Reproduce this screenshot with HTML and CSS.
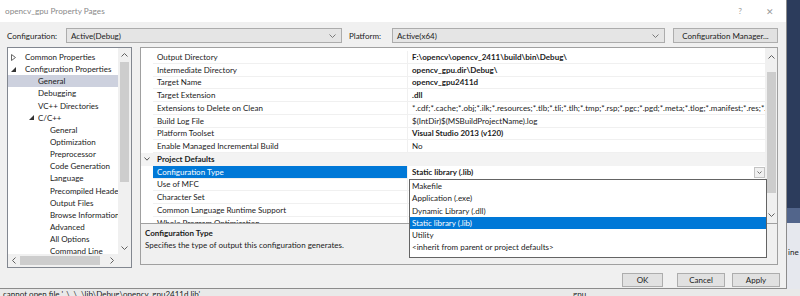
FILE: index.html
```html
<!DOCTYPE html>
<html lang="en">
<head>
    <meta charset="UTF-8">
    <meta name="viewport" content="width=device-width, initial-scale=1.0">
    <title>opencv_gpu Property Pages</title>
    <link rel="stylesheet" href="styles.css">
</head>
<body>
    <div class="screen">
        <div class="dialog">
            <div class="titlebar">
                <span class="title">opencv_gpu Property Pages</span>
                <span class="title-btn">?</span>
                <span class="title-btn close">&#x2715;</span>
            </div>

            <div class="toolbar">
                <span class="tb-label">Configuration:</span>
                <div class="combo combo-config">
                    <span>Active(Debug)</span>
                    <svg width="7" height="4" viewBox="0 0 7 4"><polyline points="0.5,0.5 3.5,3.5 6.5,0.5" fill="none" stroke="#7a7a7a"/></svg>
                </div>
                <span class="tb-label platform-label">Platform:</span>
                <div class="combo combo-platform">
                    <span>Active(x64)</span>
                    <svg width="7" height="4" viewBox="0 0 7 4"><polyline points="0.5,0.5 3.5,3.5 6.5,0.5" fill="none" stroke="#7a7a7a"/></svg>
                </div>
                <button class="btn btn-manager">Configuration Manager...</button>
            </div>

            <div class="main">
                <!-- category tree -->
                <div class="tree">
                    <div class="tree-body">
                        <ul class="tree-list">
                            <li class="node lvl0"><span class="exp"><svg width="5" height="7" viewBox="0 0 5 7"><polygon points="0.5,0.5 4.5,3.5 0.5,6.5" fill="none" stroke="#666"/></svg></span>Common Properties</li>
                            <li class="node lvl0"><span class="exp"><svg width="5" height="5" viewBox="0 0 5 5"><polygon points="5,0 5,5 0,5" fill="#333"/></svg></span>Configuration Properties</li>
                            <li class="node lvl1 selected">General</li>
                            <li class="node lvl1">Debugging</li>
                            <li class="node lvl1">VC++ Directories</li>
                            <li class="node lvl1x"><span class="exp small"><svg width="5" height="5" viewBox="0 0 5 5"><polygon points="5,0 5,5 0,5" fill="#333"/></svg></span>C/C++</li>
                            <li class="node lvl2">General</li>
                            <li class="node lvl2">Optimization</li>
                            <li class="node lvl2">Preprocessor</li>
                            <li class="node lvl2">Code Generation</li>
                            <li class="node lvl2">Language</li>
                            <li class="node lvl2">Precompiled Headers</li>
                            <li class="node lvl2">Output Files</li>
                            <li class="node lvl2">Browse Information</li>
                            <li class="node lvl2">Advanced</li>
                            <li class="node lvl2">All Options</li>
                            <li class="node lvl2">Command Line</li>
                        </ul>
                        <div class="vscroll tree-vscroll">
                            <span class="arrow-box"><svg width="7" height="4" viewBox="0 0 7 4"><polyline points="0.5,3.5 3.5,0.5 6.5,3.5" fill="none" stroke="#606060"/></svg></span>
                            <div class="thumb tree-thumb"></div>
                            <div class="spacer"></div>
                            <span class="arrow-box"><svg width="7" height="4" viewBox="0 0 7 4"><polyline points="0.5,0.5 3.5,3.5 6.5,0.5" fill="none" stroke="#606060"/></svg></span>
                        </div>
                    </div>
                    <div class="hscroll">
                        <span class="harrow"><svg width="4" height="7" viewBox="0 0 4 7"><polyline points="3.5,0.5 0.5,3.5 3.5,6.5" fill="none" stroke="#606060"/></svg></span>
                        <div class="hthumb"></div>
                        <div class="spacer"></div>
                        <span class="harrow"><svg width="4" height="7" viewBox="0 0 4 7"><polyline points="0.5,0.5 3.5,3.5 0.5,6.5" fill="none" stroke="#606060"/></svg></span>
                        <span class="corner"></span>
                    </div>
                </div>

                <!-- property grid -->
                <div class="props">
                    <div class="grid">
                        <div class="rows">
                            <div class="row"><span class="gutter"></span><span class="name">Output Directory</span><span class="value b">F:\opencv\opencv_2411\build\bin\Debug\</span></div>
                            <div class="row"><span class="gutter"></span><span class="name">Intermediate Directory</span><span class="value b">opencv_gpu.dir\Debug\</span></div>
                            <div class="row"><span class="gutter"></span><span class="name">Target Name</span><span class="value b">opencv_gpu2411d</span></div>
                            <div class="row"><span class="gutter"></span><span class="name">Target Extension</span><span class="value b">.dll</span></div>
                            <div class="row"><span class="gutter"></span><span class="name">Extensions to Delete on Clean</span><span class="value">*.cdf;*.cache;*.obj;*.ilk;*.resources;*.tlb;*.tli;*.tlh;*.tmp;*.rsp;*.pgc;*.pgd;*.meta;*.tlog;*.manifest;*.res;*.pch;*.exp;*.idb</span></div>
                            <div class="row"><span class="gutter"></span><span class="name">Build Log File</span><span class="value">$(IntDir)$(MSBuildProjectName).log</span></div>
                            <div class="row"><span class="gutter"></span><span class="name">Platform Toolset</span><span class="value b">Visual Studio 2013 (v120)</span></div>
                            <div class="row"><span class="gutter"></span><span class="name">Enable Managed Incremental Build</span><span class="value">No</span></div>
                            <div class="row cat"><span class="gutter"><svg width="6" height="4" viewBox="0 0 6 4"><polyline points="0.5,0.5 3,3.2 5.5,0.5" fill="none" stroke="#555"/></svg></span><span class="cat-name">Project Defaults</span></div>
                            <div class="row"><span class="gutter"></span><span class="name sel">Configuration Type</span><span class="value b editing"><span>Static library (.lib)</span><span class="dd-btn"><svg width="5" height="3" viewBox="0 0 5 3"><polyline points="0.5,0.5 2.5,2.5 4.5,0.5" fill="none" stroke="#707070"/></svg></span></span></div>
                            <div class="row"><span class="gutter"></span><span class="name">Use of MFC</span><span class="value"></span></div>
                            <div class="row"><span class="gutter"></span><span class="name">Character Set</span><span class="value"></span></div>
                            <div class="row"><span class="gutter"></span><span class="name">Common Language Runtime Support</span><span class="value"></span></div>
                            <div class="row"><span class="gutter"></span><span class="name">Whole Program Optimization</span><span class="value"></span></div>
                        </div>
                        <div class="vscroll grid-vscroll">
                            <span class="arrow-box top"><svg width="7" height="4" viewBox="0 0 7 4"><polyline points="0.5,3.5 3.5,0.5 6.5,3.5" fill="none" stroke="#606060"/></svg></span>
                            <div class="thumb grid-thumb"></div>
                            <div class="spacer"></div>
                            <span class="arrow-box bottom"><svg width="7" height="4" viewBox="0 0 7 4"><polyline points="0.5,0.5 3.5,3.5 6.5,0.5" fill="none" stroke="#606060"/></svg></span>
                        </div>
                    </div>
                    <div class="desc">
                        <div class="desc-title">Configuration Type</div>
                        <div>Specifies the type of output this configuration generates.</div>
                    </div>

                    <ul class="popup">
                        <li>Makefile</li>
                        <li>Application (.exe)</li>
                        <li>Dynamic Library (.dll)</li>
                        <li class="picked">Static library (.lib)</li>
                        <li>Utility</li>
                        <li>&lt;inherit from parent or project defaults&gt;</li>
                    </ul>
                </div>
            </div>

            <div class="footer">
                <button class="btn btn-ok">OK</button>
                <button class="btn btn-cancel">Cancel</button>
                <button class="btn btn-apply">Apply</button>
            </div>
        </div>

        <div class="side">
            <div class="side-dark"></div>
            <div class="side-mid"></div>
            <div class="side-light">ine</div>
        </div>
    </div>

    <div class="statusline">
        <span class="status-msg">cannot open file '..\..\..\lib\Debug\opencv_gpu2411d.lib'</span>
        <span class="status-col">gpu</span>
    </div>
</body>
</html>
```

FILE: styles.css
```css
* {
    box-sizing: border-box;
}
body {
    margin: 0;
    width: 800px;
    height: 296px;
    overflow: hidden;
    background-color: #e9e9e9;
    font-family: "Segoe UI", Lato, sans-serif;
    font-size: 8px;
    color: #1b1b1b;
}
ul {
    margin: 0;
    padding: 0;
    list-style: none;
}
.screen {
    display: flex;
    height: 289px;
}
.dialog {
    width: 787px;
    background-color: #f0f0f0;
    border-right: 1px solid #8c8c8c;
    border-bottom: 1px solid #8c8c8c;
    display: flex;
    flex-direction: column;
}

/* title bar */
.titlebar {
    height: 22px;
    background-color: #fff;
    display: flex;
    align-items: center;
    padding: 0 6px 0 5px;
    color: #8a8a8a;
    font-size: 8.2px;
}
.title {
    flex: 1;
}
.title-btn {
    width: 20px;
    text-align: center;
    color: #9a9a9a;
}
.close {
    margin-left: 10px;
    font-size: 9px;
}

/* configuration row */
.toolbar {
    margin-top: 6px;
    height: 15px;
    display: flex;
    align-items: center;
    padding-left: 7px;
}
.tb-label {
    width: 59px;
}
.platform-label {
    margin-left: 7px;
    width: 43px;
}
.combo {
    height: 15px;
    border: 1px solid #acacac;
    background-color: #e5e5e5;
    display: flex;
    align-items: center;
    justify-content: space-between;
    padding: 0 5px 0 4px;
}
.combo-config {
    width: 276px;
}
.combo-platform {
    width: 273px;
}
.btn {
    font-family: inherit;
    font-size: 8px;
    color: #1b1b1b;
    background-color: #e1e1e1;
    border: 1px solid #adadad;
    padding: 0;
    height: 15px;
}
.btn-manager {
    margin-left: 8px;
    width: 105px;
}

/* main area */
.main {
    margin-top: 4px;
    height: 221px;
    display: flex;
    gap: 8px;
    padding-left: 7px;
}
.tree {
    width: 125px;
    border: 1px solid #828790;
    background-color: #fff;
    display: flex;
    flex-direction: column;
}
.tree-body {
    flex: 1;
    display: flex;
    min-height: 0;
}
.tree-list {
    flex: 1;
    padding-top: 3px;
    overflow: hidden;
}
.node {
    height: 12.15px;
    display: flex;
    align-items: center;
    white-space: nowrap;
}
.lvl0 {
    padding-left: 3px;
}
.lvl1 {
    padding-left: 30px;
}
.lvl1x {
    padding-left: 21px;
}
.lvl2 {
    padding-left: 42px;
}
.exp {
    width: 14px;
    display: flex;
    align-items: center;
}
.exp.small {
    width: 9px;
}
.selected {
    background-color: #cdd1de;
}

.vscroll {
    background-color: #f0f0f0;
    display: flex;
    flex-direction: column;
    align-items: center;
}
.tree-vscroll {
    width: 13px;
}
.arrow-box {
    height: 13px;
    display: flex;
    align-items: center;
    justify-content: center;
}
.spacer {
    flex: 1;
}
.thumb {
    background-color: #cdcdcd;
}
.tree-thumb {
    width: 9px;
    margin-top: 1px;
    height: 120px;
}
.hscroll {
    height: 13px;
    display: flex;
    align-items: center;
    background-color: #f0f0f0;
}
.harrow {
    width: 12px;
    display: flex;
    justify-content: center;
}
.hthumb {
    width: 80px;
    height: 9px;
    background-color: #cdcdcd;
}
.corner {
    width: 13px;
    height: 13px;
    background-color: #f0f0f0;
}

/* property grid */
.props {
    width: 638px;
    display: flex;
    flex-direction: column;
    position: relative;
}
.grid {
    height: 177px;
    border: 1px solid #a0a0a0;
    background-color: #fff;
    display: flex;
}
.rows {
    flex: 1;
    padding-top: 3px;
    overflow: hidden;
}
.row {
    height: 12.75px;
    display: flex;
    align-items: stretch;
    white-space: nowrap;
}
.gutter {
    width: 12px;
    display: flex;
    align-items: center;
    justify-content: center;
}
.name {
    width: 255px;
    padding-left: 4px;
    border-bottom: 1px solid #f0f0f0;
    border-right: 1px solid #f0f0f0;
    display: flex;
    align-items: center;
}
.name.sel {
    background-color: #0078d7;
    color: #fff;
}
.value {
    flex: 1;
    min-width: 0;
    padding-left: 4px;
    border-bottom: 1px solid #f0f0f0;
    display: flex;
    align-items: center;
    overflow: hidden;
}
.b {
    font-weight: bold;
}
.value.editing {
    justify-content: space-between;
    border-bottom: none;
}
.dd-btn {
    width: 11px;
    height: 11px;
    border: 1px solid #c3c3c3;
    background-color: #f0f0f0;
    display: flex;
    align-items: center;
    justify-content: center;
}
.row.cat {
    background-color: #f3f3f3;
}
.cat-name {
    padding-left: 4px;
    font-weight: bold;
    display: flex;
    align-items: center;
}
.grid-vscroll {
    width: 12px;
}
.arrow-box.top {
    height: 18px;
}
.arrow-box.bottom {
    height: 16px;
}
.grid-thumb {
    width: 9px;
    margin-top: 6px;
    height: 121px;
}

.desc {
    height: 41px;
    border: 1px solid #a0a0a0;
    border-top: none;
    background-color: #f0f0f0;
    padding: 3px 4px 0;
    line-height: 12px;
}
.desc-title {
    font-weight: bold;
}

/* open drop-down list */
.popup {
    position: absolute;
    left: 269px;
    top: 132px;
    width: 358px;
    height: 79px;
    border: 1px solid #646464;
    background-color: #fff;
}
.popup li {
    height: 12.3px;
    line-height: 12.3px;
    padding-left: 2px;
}
.popup li.picked {
    background-color: #0078d7;
    color: #fff;
}

/* buttons */
.footer {
    margin-top: 5px;
    display: flex;
    justify-content: flex-end;
    padding-right: 6px;
}
.footer .btn {
    height: 14px;
}
.btn-ok {
    width: 41px;
}
.btn-cancel {
    width: 48px;
    margin-left: 14px;
}
.btn-apply {
    width: 48px;
    margin-left: 7px;
}

/* window behind the dialog */
.side {
    flex: 1;
    display: flex;
    flex-direction: column;
    overflow: hidden;
}
.side-dark {
    height: 208px;
    background-color: #2c3c5c;
}
.side-mid {
    height: 15px;
    background-color: #52658b;
}
.side-light {
    flex: 1;
    background-color: #e6e8ee;
    padding: 23px 0 0 1px;
    line-height: 12px;
    font-size: 8px;
}
.statusline {
    height: 7px;
    overflow: hidden;
    display: flex;
    line-height: 9px;
    font-size: 8px;
    padding: 1px 0 0 3px;
}
.status-msg {
    width: 570px;
}
```
